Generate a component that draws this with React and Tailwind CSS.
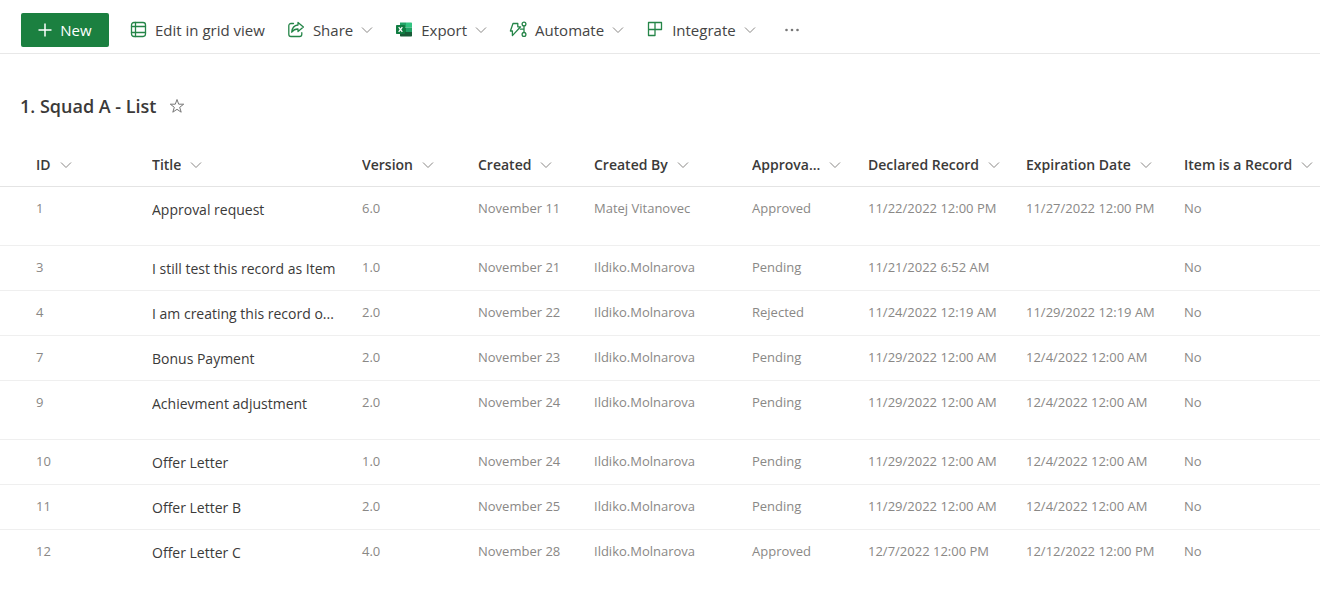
import clsx from 'clsx';

const COLUMNS = [
  { key: 'id', label: 'ID', width: 'w-[140px]' },
  { key: 'title', label: 'Title', width: 'w-[210px]' },
  { key: 'version', label: 'Version', width: 'w-[116px]' },
  { key: 'created', label: 'Created', width: 'w-[116px]' },
  { key: 'createdBy', label: 'Created By', width: 'w-[158px]' },
  { key: 'approval', label: 'Approva...', width: 'w-[116px]' },
  { key: 'declared', label: 'Declared Record', width: 'w-[158px]' },
  { key: 'expiration', label: 'Expiration Date', width: 'w-[158px]' },
  { key: 'isRecord', label: 'Item is a Record', width: 'w-auto' },
];

const ITEMS = [
  { id: 1, title: 'Approval request', version: '6.0', created: 'November 11', createdBy: 'Matej Vitanovec', approval: 'Approved', declared: '11/22/2022 12:00 PM', expiration: '11/27/2022 12:00 PM', isRecord: 'No', tall: true },
  { id: 3, title: 'I still test this record as Item', version: '1.0', created: 'November 21', createdBy: 'Ildiko.Molnarova', approval: 'Pending', declared: '11/21/2022 6:52 AM', expiration: '', isRecord: 'No' },
  { id: 4, title: 'I am creating this record o...', version: '2.0', created: 'November 22', createdBy: 'Ildiko.Molnarova', approval: 'Rejected', declared: '11/24/2022 12:19 AM', expiration: '11/29/2022 12:19 AM', isRecord: 'No' },
  { id: 7, title: 'Bonus Payment', version: '2.0', created: 'November 23', createdBy: 'Ildiko.Molnarova', approval: 'Pending', declared: '11/29/2022 12:00 AM', expiration: '12/4/2022 12:00 AM', isRecord: 'No' },
  { id: 9, title: 'Achievment adjustment', version: '2.0', created: 'November 24', createdBy: 'Ildiko.Molnarova', approval: 'Pending', declared: '11/29/2022 12:00 AM', expiration: '12/4/2022 12:00 AM', isRecord: 'No', tall: true },
  { id: 10, title: 'Offer Letter', version: '1.0', created: 'November 24', createdBy: 'Ildiko.Molnarova', approval: 'Pending', declared: '11/29/2022 12:00 AM', expiration: '12/4/2022 12:00 AM', isRecord: 'No' },
  { id: 11, title: 'Offer Letter B', version: '2.0', created: 'November 25', createdBy: 'Ildiko.Molnarova', approval: 'Pending', declared: '11/29/2022 12:00 AM', expiration: '12/4/2022 12:00 AM', isRecord: 'No' },
  { id: 12, title: 'Offer Letter C', version: '4.0', created: 'November 28', createdBy: 'Ildiko.Molnarova', approval: 'Approved', declared: '12/7/2022 12:00 PM', expiration: '12/12/2022 12:00 PM', isRecord: 'No' },
];

function Chevron() {
  return (
    <svg viewBox="0 0 12 12" className="size-3 shrink-0 text-[#8a8886]" fill="none" stroke="currentColor" aria-hidden="true">
      <path d="M1 3.5 6 8.5 11 3.5" />
    </svg>
  );
}

function StrokeIcon({ children }) {
  return (
    <svg
      viewBox="0 0 18 18"
      className="size-[18px] shrink-0 text-[#258548]"
      fill="none"
      stroke="currentColor"
      strokeWidth="1.3"
      strokeLinejoin="round"
      strokeLinecap="round"
      aria-hidden="true"
    >
      {children}
    </svg>
  );
}

function GridIcon() {
  return (
    <StrokeIcon>
      <rect x="2.5" y="1.5" width="14" height="14" rx="2.4" />
      <path d="M6.5 1.5v14M2.5 5.5h14M2.5 11.5h14" />
    </StrokeIcon>
  );
}

function ShareIcon() {
  return (
    <StrokeIcon>
      <path d="M6.5 2.5H4A2.2 2.2 0 0 0 1.8 4.7v8.6A2.2 2.2 0 0 0 4 15.5h8.6a2.2 2.2 0 0 0 2.2-2.2v-1.6" />
      <path d="M11 1.4 16.4 6 11 10.6V8C8.2 7.9 6.3 9 4.7 11.2 5 7 7.2 4.4 11 4z" />
    </StrokeIcon>
  );
}

function ExcelIcon() {
  return (
    <svg viewBox="0 0 18 18" className="size-[18px] shrink-0" aria-hidden="true">
      <path d="M5 1.5h6v5H5z" fill="#21a366" />
      <path d="M11 1.5h5.3a.7.7 0 0 1 .7.7v4.3h-6z" fill="#33c481" />
      <path d="M5 6.5h6V11H5z" fill="#107c41" />
      <path d="M11 6.5h6V11h-6z" fill="#21a366" />
      <path d="M5 11h12v3.8a.7.7 0 0 1-.7.7H5.7a.7.7 0 0 1-.7-.7z" fill="#185c37" />
      <rect x="1" y="4" width="9" height="9" rx=".7" fill="#107c41" />
      <path d="m3.7 6.2 3.6 4.6M7.3 6.2l-3.6 4.6" stroke="#fff" strokeWidth="1.3" />
    </svg>
  );
}

function AutomateIcon() {
  return (
    <StrokeIcon>
      <path d="M4 2.5h4.8v3.3h2.8L3.4 14.6V10H1.4z" />
      <path d="M15 5v6.4M11.4 8.2H15" />
      <circle cx="15" cy="3" r="1.9" />
      <circle cx="15" cy="13.4" r="1.9" />
    </StrokeIcon>
  );
}

function IntegrateIcon() {
  return (
    <StrokeIcon>
      <path d="M2.5 1.5h13v7h-13zM9 1.5v13H2.5v-13" />
    </StrokeIcon>
  );
}

function Command({ icon, label, menu }) {
  return (
    <button type="button" aria-haspopup={menu ? 'menu' : undefined} className="flex items-center gap-2 whitespace-nowrap">
      {icon}
      <span>{label}</span>
      {menu && <Chevron />}
    </button>
  );
}

function CommandBar() {
  return (
    <header className="flex h-[54px] items-center gap-5 border-b border-[#e8e8e8] px-[21px] pb-px pt-2 text-[15px] leading-5 text-[#444]">
      <button type="button" className="flex h-[34px] w-[88px] items-center justify-center gap-2 rounded-xs bg-[#1b8040] font-medium text-white">
        <svg viewBox="0 0 14 14" className="size-3.5" fill="none" stroke="currentColor" strokeWidth="1.5" aria-hidden="true">
          <path d="M7 .5v13M.5 7h13" />
        </svg>
        New
      </button>
      <div className="flex items-center gap-[22px]">
        <Command icon={<GridIcon />} label="Edit in grid view" />
        <Command icon={<ShareIcon />} label="Share" menu />
        <Command icon={<ExcelIcon />} label="Export" menu />
        <Command icon={<AutomateIcon />} label="Automate" menu />
        <Command icon={<IntegrateIcon />} label="Integrate" menu />
      </div>
      <button type="button" aria-label="More" className="ml-2 text-[#777]">
        <svg viewBox="0 0 16 16" className="size-4" fill="currentColor" aria-hidden="true">
          <circle cx="2.5" cy="8" r="1.3" />
          <circle cx="8" cy="8" r="1.3" />
          <circle cx="13.5" cy="8" r="1.3" />
        </svg>
      </button>
    </header>
  );
}

function ListTable() {
  return (
    <table className="w-full table-fixed border-collapse text-left">
      <thead>
        <tr className="h-11 border-b border-[#e4e4e4]">
          {COLUMNS.map((col, i) => (
            <th key={col.key} scope="col" className={clsx('pr-1 pt-0.5 font-semibold', i === 0 ? 'pl-9' : 'pl-3', col.width)}>
              <button type="button" className="flex max-w-full items-center gap-[9px] text-sm text-[#3b3a39]">
                <span className="truncate">{col.label}</span>
                <Chevron />
              </button>
            </th>
          ))}
        </tr>
      </thead>
      <tbody>
        {ITEMS.map((item) => (
          <tr
            key={item.id}
            className={clsx('border-b border-[#efefef] align-top last:border-b-0', item.tall ? 'h-[59px]' : 'h-[45px]')}
          >
            {COLUMNS.map((col, i) => (
              <td key={col.key} className={clsx('truncate pr-1 pt-[11px] text-[13px] leading-5 text-[#8a8886]', i === 0 ? 'pl-9' : 'pl-3')}>
                {col.key === 'title' ? (
                  <a href="#item" className="block truncate text-sm leading-6 text-[#3b3a39]">
                    {item.title}
                  </a>
                ) : (
                  item[col.key]
                )}
              </td>
            ))}
          </tr>
        ))}
      </tbody>
    </table>
  );
}

export default function App() {
  return (
    <div className="min-h-screen bg-white font-['Open_Sans','Noto_Sans',sans-serif]">
      <CommandBar />
      <main>
        <div className="flex items-center gap-3 px-5 pb-6 pt-10">
          <h1 className="text-lg leading-6 font-semibold text-[#3b3a39]">1. Squad A - List</h1>
          <button type="button" aria-label="Add to favorites" className="text-[#777]">
            <svg viewBox="0 0 16 16" className="size-4" fill="none" stroke="currentColor" aria-hidden="true">
              <path d="m8 1.5 1.7 4.7h5l-4 3.1 1.5 4.9L8 11.3l-4.2 2.9 1.5-4.9-4-3.1h5z" />
            </svg>
          </button>
        </div>
        <ListTable />
      </main>
    </div>
  );
}
